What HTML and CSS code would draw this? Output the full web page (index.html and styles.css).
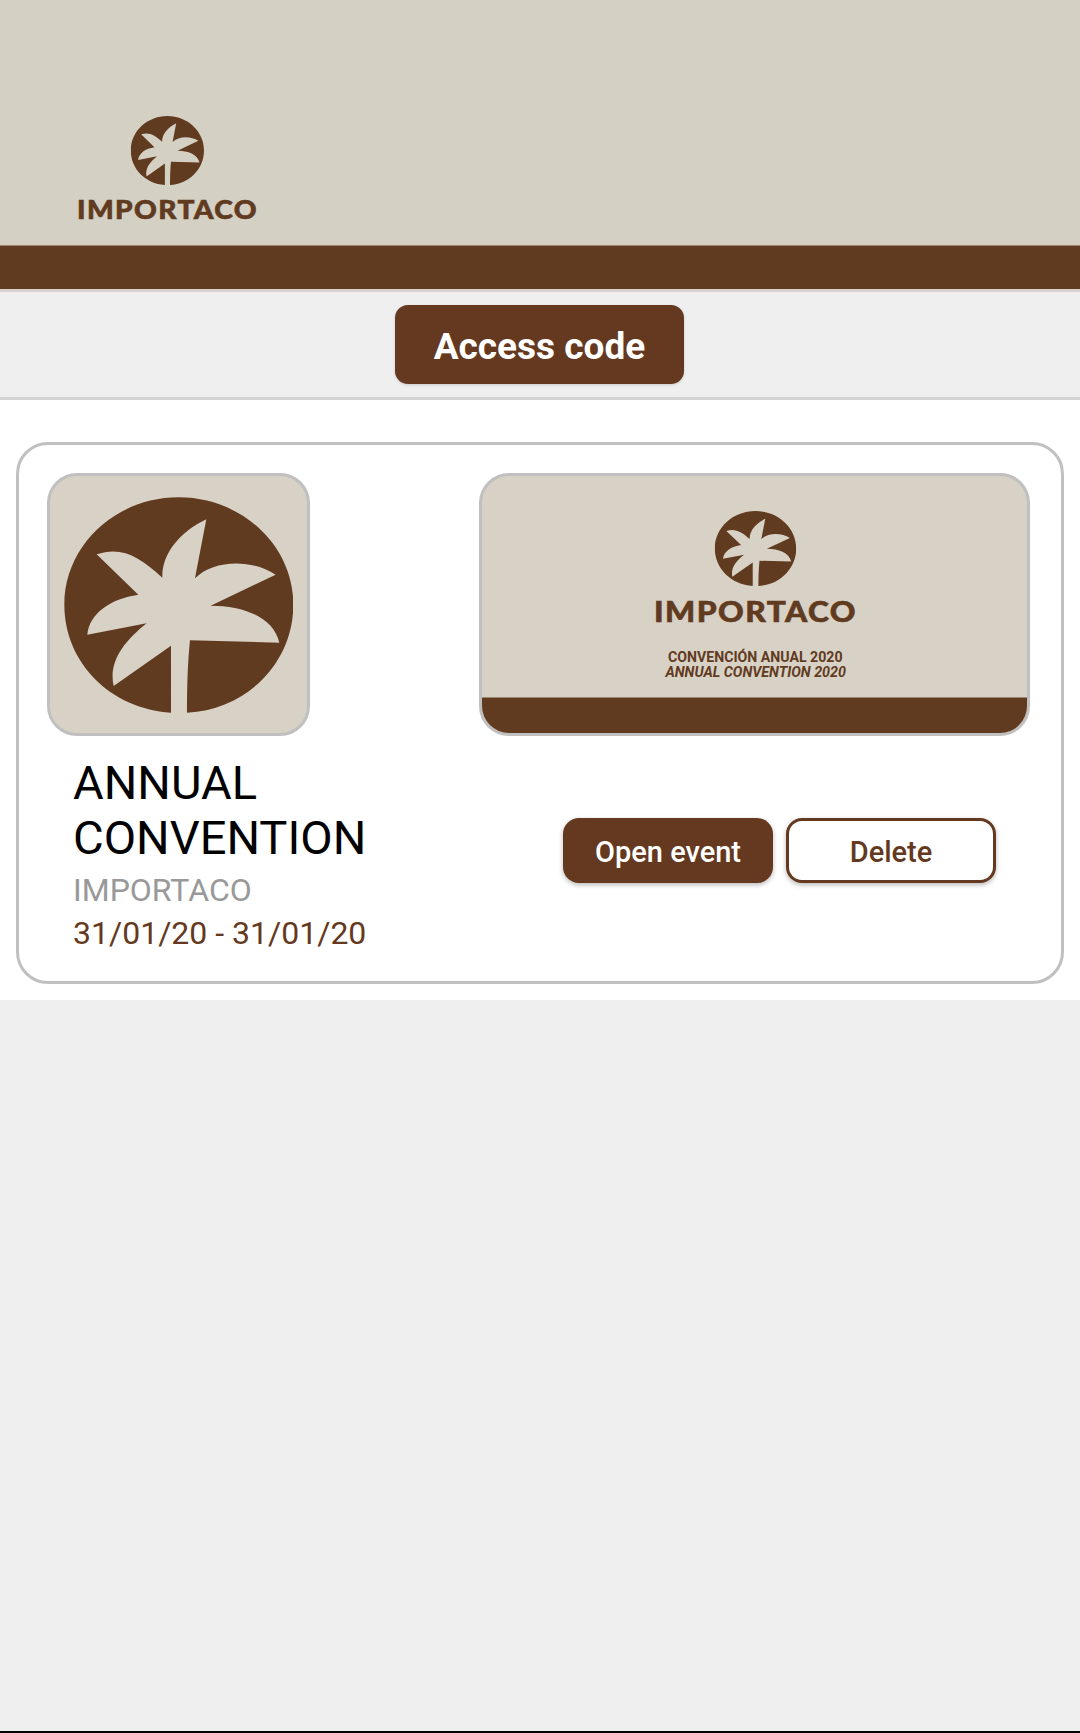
FILE: index.html
```html
<!DOCTYPE html>
<html lang="en">
<head>
<meta charset="utf-8">
<title>Events</title>
<link rel="stylesheet" href="styles.css">
</head>
<body>
<svg class="defs" width="0" height="0" aria-hidden="true">
  <symbol id="palm" viewBox="192 200 688 648" preserveAspectRatio="none">
    <path fill="#613b1f" fill-rule="evenodd" d="M513 847C330 835 193 695 193 523C193 345 347 201 536 201S880 345 880 523C880 695 742 838 561 847C561 770 563 700 570 630L838 637C820 560 730 526 632 526L827 433C755 385 640 388 585 444L619 267C540 305 485 370 487 442C420 380 365 346 290 372L415 493C330 505 268 550 262 613L440 579C370 635 325 695 341 767L513 646Z"/>
  </symbol>
</svg>
<header class="hero">
  <svg class="hero-logo" width="200" height="120" viewBox="70 110 200 120" role="img" aria-label="Importaco">
    <use href="#palm" x="130.7" y="116" width="73.3" height="69"/>
    <text class="wordmark" x="77" y="218.5" font-size="26.5" textLength="181" lengthAdjust="spacingAndGlyphs">IMPORTACO</text>
  </svg>
</header>
<div class="toolbar"><button class="btn btn-code">Access code</button></div>
<main class="events">
  <article class="card">
    <div class="media">
      <div class="thumb"><svg width="229.3" height="216"><use href="#palm" width="229.3" height="216"/></svg></div>
      <div class="banner">
        <svg width="545" height="257" viewBox="482 476 545 257" role="img" aria-label="Annual convention">
          <use href="#palm" x="714.7" y="511" width="81.5" height="75"/>
          <text class="wordmark" x="654" y="622" font-size="28.7" textLength="203" lengthAdjust="spacingAndGlyphs">IMPORTACO</text>
          <text class="caption" x="668" y="662.3" textLength="174.5" lengthAdjust="spacingAndGlyphs">CONVENCIÓN ANUAL 2020</text>
          <text class="caption italic" x="665.5" y="677.3" textLength="180.5" lengthAdjust="spacingAndGlyphs">ANNUAL CONVENTION 2020</text>
          <rect x="482" y="697.5" width="545" height="36" fill="#613b1f"/>
        </svg>
      </div>
    </div>
    <div class="details">
      <div class="info">
        <h2 class="title">ANNUAL CONVENTION</h2>
        <p class="org">IMPORTACO</p>
        <p class="dates">31/01/20 - 31/01/20</p>
      </div>
      <div class="actions">
        <button class="btn btn-open">Open event</button>
        <button class="btn btn-delete">Delete</button>
      </div>
    </div>
  </article>
</main>
</body>
</html>
```
FILE: styles.css
```css
* { box-sizing: border-box; }
body {
  margin: 0;
  height: 1733px;
  overflow: hidden;
  background: #efefef;
  border-bottom: 2px solid #000;
  font-family: Roboto, sans-serif;
}
.defs { display: block; height: 0; }
.hero {
  height: 292px;
  padding: 110px 0 0 70px;
  background: linear-gradient(#d5d0c4 245px, #613b1f 246px 289px, #d9d1cb 289px);
}
.hero-logo, .thumb svg, .banner svg { display: block; }
.wordmark {
  font-family: Lato, sans-serif;
  font-weight: 900;
  letter-spacing: 1.3px;
  fill: #613b1f;
  stroke: #613b1f;
  stroke-width: .6px;
}
.caption { font-size: 14.3px; font-weight: 700; fill: #613b1f; }
.italic { font-style: italic; }
.toolbar {
  height: 108px;
  padding: 13px 0 0 395px;
  border-bottom: 3px solid #d3d3d3;
}
.btn {
  display: block;
  padding: 0;
  border: 0;
  font-family: inherit;
  color: #fff;
  background: #643920;
}
.btn-code {
  width: 289px;
  height: 79px;
  padding-top: 3px;
  border-radius: 13px;
  font-size: 37px;
  font-weight: 700;
  box-shadow: 0 1px 3px rgba(0, 0, 0, .15);
}
.events { height: 600px; padding: 42px 16px 0; background: #fff; }
.card {
  height: 542px;
  padding: 28px 31px 0 28px;
  border: 3px solid #c0c0c0;
  border-radius: 32px;
}
.media { display: flex; justify-content: space-between; }
.thumb, .banner {
  height: 263px;
  overflow: hidden;
  border: 3px solid #c0c0c0;
  border-radius: 30px;
  background: #d8d1c5;
}
.thumb { width: 263px; padding: 21px 0 0 14px; }
.banner { width: 551px; }
.details { display: flex; justify-content: space-between; padding: 19px 34px 0 26px; }
.info { width: 310px; }
.title { margin: 0; font-size: 47.1px; font-weight: 400; line-height: 55px; color: #000; }
.org, .dates { margin: 0; font-size: 32px; line-height: 43px; }
.org { margin-top: 4px; color: #999; }
.dates { color: #643920; }
.actions { display: flex; gap: 13px; padding-top: 63px; }
.btn-open, .btn-delete {
  width: 210px;
  height: 65px;
  padding-top: 3px;
  border-radius: 16px;
  font-size: 29px;
  font-weight: 500;
  box-shadow: 0 2px 5px rgba(0, 0, 0, .28);
}
.btn-delete { border: 3px solid #643920; color: #643920; background: #fff; }
```
